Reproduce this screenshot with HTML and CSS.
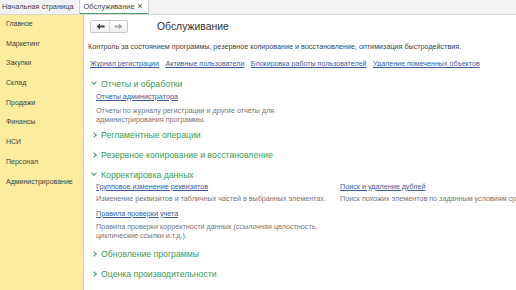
FILE: index.html
```html
<!DOCTYPE html>
<html lang="ru">
<head>
<meta charset="utf-8">
<link rel="stylesheet" href="styles.css">
</head>
<body>
<div class="tabs">
  <div class="tab">Начальная страница</div>
  <div class="tab active">Обслуживание <span class="x">×</span></div>
</div>
<div class="body">
  <nav class="side">
    <div class="item">Главное</div>
    <div class="item">Маркетинг</div>
    <div class="item">Закупки</div>
    <div class="item">Склад</div>
    <div class="item">Продажи</div>
    <div class="item">Финансы</div>
    <div class="item">НСИ</div>
    <div class="item">Персонал</div>
    <div class="item">Администрирование</div>
  </nav>
  <main class="main">
    <div class="head">
      <div class="nav">
        <span class="btn"><svg width="9" height="7" viewBox="0 0 9 7"><path d="M0.5 3.5 L4 0.5 L4 2.5 L8.5 2.5 L8.5 4.5 L4 4.5 L4 6.5 Z" fill="#444"/></svg></span>
        <span class="btn"><svg width="9" height="7" viewBox="0 0 9 7"><path d="M8.5 3.5 L5 0.5 L5 2.5 L0.5 2.5 L0.5 4.5 L5 4.5 L5 6.5 Z" fill="#aaa"/></svg></span>
      </div>
      <h1 class="title">Обслуживание</h1>
    </div>
    <p class="lead">Контроль за состоянием программы, резервное копирование и восстановление, оптимизация быстродействия.</p>
    <div class="links">
      <a>Журнал регистрации</a>
      <a>Активные пользователи</a>
      <a>Блокировка работы пользователей</a>
      <a>Удаление помеченных объектов</a>
    </div>

    <div class="sec">
      <div class="sh"><span class="chev down"></span>Отчеты и обработки</div>
      <div class="cols first">
        <div class="col">
          <a class="sl">Отчеты администратора</a>
          <p class="desc">Отчеты по журналу регистрации и другие отчеты для<br>администрирования программы.</p>
        </div>
      </div>
    </div>
    <div class="sec">
      <div class="sh"><span class="chev right"></span>Регламентные операции</div>
    </div>
    <div class="sec">
      <div class="sh"><span class="chev right"></span>Резервное копирование и восстановление</div>
    </div>
    <div class="sec">
      <div class="sh"><span class="chev down"></span>Корректировка данных</div>
      <div class="cols second">
        <div class="col">
          <a class="sl">Групповое изменение реквизитов</a>
          <p class="desc">Изменение реквизитов и табличных частей в выбранных элементах.</p>
          <a class="sl">Правила проверки учета</a>
          <p class="desc">Правила проверки корректности данных (ссылочная целостность,<br>циклические ссылки и.т.д.).</p>
        </div>
        <div class="col">
          <a class="sl">Поиск и удаление дублей</a>
          <p class="desc">Поиск похожих элементов по заданным условиям сравнения.</p>
        </div>
      </div>
    </div>
    <div class="sec">
      <div class="sh"><span class="chev right"></span>Обновление программы</div>
    </div>
    <div class="sec">
      <div class="sh"><span class="chev right"></span>Оценка производительности</div>
    </div>
  </main>
</div>
</body>
</html>
```
FILE: styles.css
```css
* { box-sizing: border-box; }
html, body { margin: 0; padding: 0; }
body {
  width: 516px; height: 290px; overflow: hidden;
  font-family: "Liberation Sans", Arial, sans-serif;
  background: #fff; color: #333;
}
.tabs {
  height: 15px; display: flex; background: #f2f2f2;
  border-bottom: 1px solid #d6d6d6;
}
.tab {
  font-size: 7.4px; color: #444; padding: 0 5px 0 2px; line-height: 14px;
  border-right: 1px solid #cfcfcf; white-space: nowrap;
}
.tab.active {
  background: #fff; padding: 0 5px 0 4px;
  border-bottom: 1.5px solid #4aa36a; line-height: 13px;
}
.tab .x { font-size: 8.5px; margin-left: 1px; }
.body { display: flex; height: 275px; }
.side {
  width: 84px; flex: none; background: #fbec9e;
  border-right: 1px solid #e0d28a; padding-top: 3px;
}
.item { font-size: 7px; color: #444; padding-left: 6px; height: 19.7px; line-height: 12px; }
.main { flex: 1; padding: 5px 0 0 4px; min-width: 0; white-space: nowrap; overflow: hidden; }
.head { display: flex; align-items: center; height: 13px; }
.nav {
  display: flex; margin-left: 2px; border: 1px solid #c9c9c9; border-radius: 2px;
  background: linear-gradient(#fff, #f0f0f0); height: 13px;
}
.btn { width: 18px; display: flex; align-items: center; justify-content: center; }
.btn + .btn { border-left: 1px solid #d8d8d8; }
.title { font-size: 10.4px; font-weight: normal; margin: 0 0 0 29px; color: #333; }
.lead { font-size: 7.2px; color: #444; margin: 8px 0 0 0; line-height: 11px; }
.links { margin: 7px 0 0 2px; font-size: 7.1px; display: flex; gap: 6.5px; line-height: 11px; }
a { color: #3d5c9c; text-decoration: underline; }
.sec { margin-top: 7px; }
.sh { font-size: 8.7px; color: #3e9a5c; display: flex; align-items: center; height: 13px; padding-left: 4px; }
.chev { width: 4px; height: 4px; border-right: 1px solid #3e9a5c; border-bottom: 1px solid #3e9a5c; margin-right: 5px; }
.chev.down { transform: rotate(45deg); margin-top: -3px; }
.chev.right { transform: rotate(-45deg); }
.cols { display: flex; padding-left: 8px; }
.cols.first { margin-bottom: -3px; }
.col { width: 244px; flex: none; }
.sl { display: block; font-size: 7.2px; line-height: 10px; }
.desc { font-size: 7.2px; color: #777; line-height: 9px; margin: 0; }
.first .sl { margin-top: 1.5px; }
.first .desc { margin-top: 4.5px; }
.second .sl { margin-top: 0.5px; }
.second .desc { margin-top: 2.5px; }
.second .desc + .sl { margin-top: 5.5px; }
.second .sl + .desc { margin-top: 2.5px; }
.second .desc:last-child { margin-top: 3.5px; }
.second .col:last-child .desc { margin-top: 2.5px; }
```
